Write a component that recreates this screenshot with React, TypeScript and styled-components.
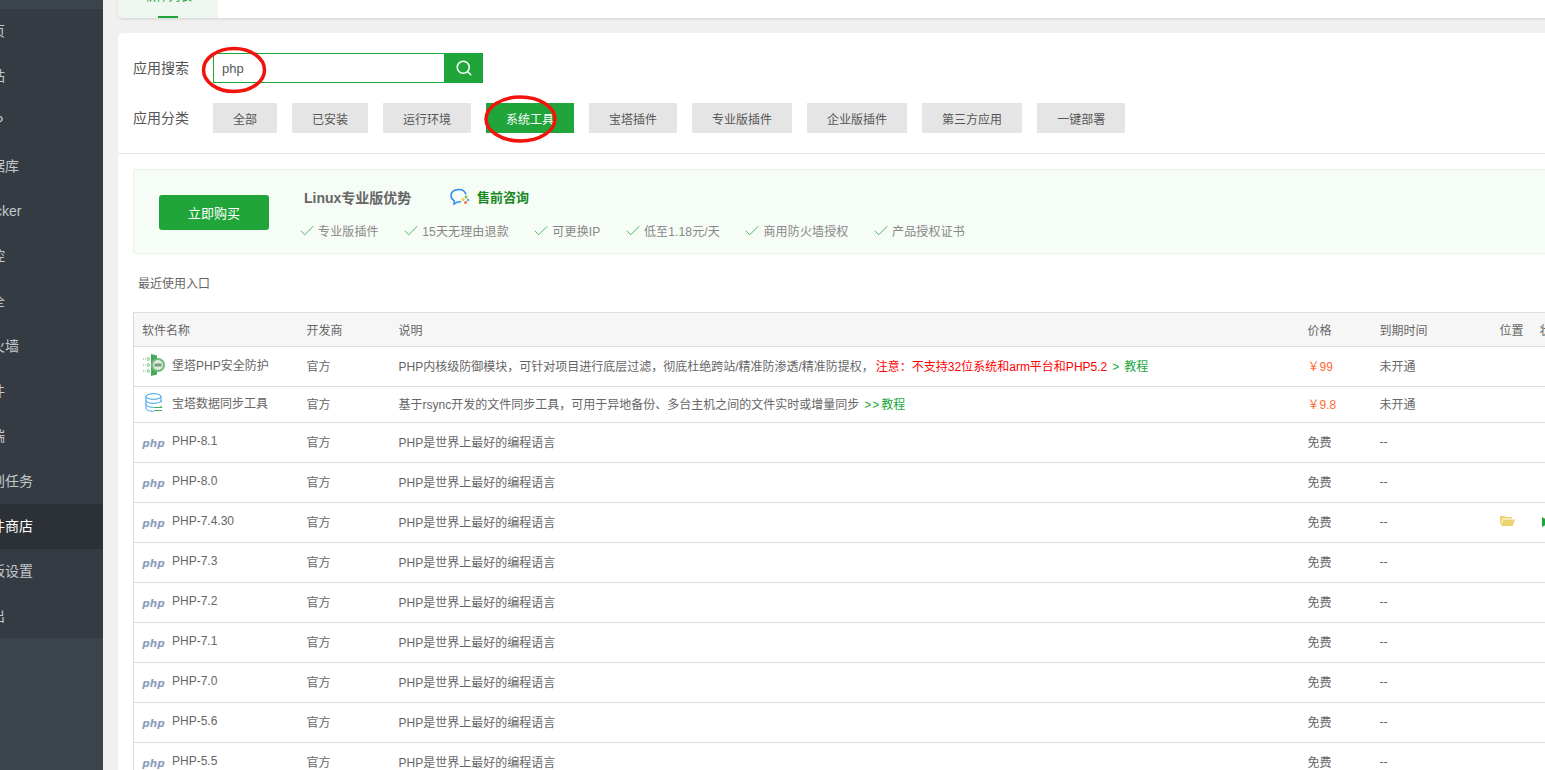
import { Check, Search } from "lucide-react";
import { createGlobalStyle, styled } from "styled-components";

const GlobalStyle = createGlobalStyle`
  html, body {
    margin: 0;
    height: 100%;
    overflow: hidden;
    background: #f0f0f0;
  }
  body {
    font-family: "Liberation Sans", "Noto Sans CJK SC", sans-serif;
    font-size: 12px;
    color: #666;
  }
`;

const Page = styled.div`
  position: relative;
  display: flex;
  width: 1545px;
  height: 770px;
  overflow: hidden;
`;

const Sidebar = styled.aside`
  flex: 0 0 103px;
  display: flex;
  flex-direction: column;
  padding-top: 9px;
  background: #3c444d;
  overflow: hidden;
`;

const MenuList = styled.ul`
  list-style: none;
  margin: 0;
  padding: 0;
  background: #343b43;
`;

const MenuItem = styled.li<{ $active?: boolean }>`
  height: 45px;
  line-height: 45px;
  text-indent: -23px;
  font-size: 14px;
  white-space: nowrap;
  color: ${(p) => (p.$active ? "#fff" : "#c4c8cc")};
  background: ${(p) => (p.$active ? "#2c3138" : "transparent")};

  &:last-child {
    height: 44px;
  }
`;

const Content = styled.main`
  flex: 0 0 1700px;
  padding-left: 15px;
`;

const TabCard = styled.div`
  display: flex;
  height: 18px;
  background: #fff;
  box-shadow: 0 1px 3px rgba(0, 0, 0, 0.12);
  border-radius: 0 0 0 5px;
  overflow: hidden;
`;

const Tab = styled.div`
  position: relative;
  width: 100px;
  height: 18px;
  background: #eef7f0;
  color: #20a53a;
  text-align: center;
  line-height: 12px;
  font-size: 12px;

  span {
    display: block;
    margin-top: -9px;
  }

  &::after {
    content: "";
    position: absolute;
    left: 40px;
    bottom: 0;
    width: 20px;
    height: 2px;
    background: #20a53a;
  }
`;

const MainCard = styled.section`
  margin-top: 15px;
  background: #fff;
  border-radius: 5px 0 0 0;
  height: 800px;
`;

const FilterArea = styled.div`
  display: flex;
  flex-direction: column;
  gap: 20px;
  padding: 20px 15px;
  border-bottom: 1px solid #e2e2e2;
`;

const FilterRow = styled.div`
  display: flex;
  align-items: center;
  height: 30px;
`;

const FilterLabel = styled.label`
  width: 80px;
  margin-top: -2px;
  font-size: 14px;
  color: #555;
`;

const SearchInput = styled.div`
  box-sizing: border-box;
  width: 231px;
  height: 30px;
  line-height: 30px;
  padding-left: 8px;
  border: 1px solid #20a53a;
  border-right: 0;
  font-size: 13px;
  color: #555;
`;

const SearchButton = styled.button`
  display: flex;
  align-items: center;
  justify-content: center;
  width: 39px;
  height: 30px;
  padding: 0;
  border: 0;
  background: #20a53a;
  color: #fff;
`;

const CategoryList = styled.div`
  display: flex;
  gap: 15px;
`;

const CategoryButton = styled.button<{ $active?: boolean }>`
  height: 30px;
  padding: 0 20px;
  border: 0;
  font-family: inherit;
  font-size: 12px;
  color: ${(p) => (p.$active ? "#fff" : "#555")};
  background: ${(p) => (p.$active ? "#20a53a" : "#e5e5e5")};
`;

const Body = styled.div`
  padding: 15px 0 0 15px;
`;

const Banner = styled.div`
  box-sizing: border-box;
  display: flex;
  align-items: center;
  height: 85px;
  padding-left: 25px;
  background: #f6fcf6;
  border: 1px solid #e9f2ec;
  border-radius: 3px 0 0 3px;
`;

const BuyButton = styled.button`
  width: 110px;
  height: 35px;
  margin-top: 2px;
  border: 0;
  border-radius: 3px;
  background: #20a53a;
  color: #fff;
  font-family: inherit;
  font-size: 13px;
`;

const BannerInfo = styled.div`
  display: flex;
  flex-direction: column;
  gap: 15px;
  margin: 3px 0 0 31px;
`;

const BannerHead = styled.div`
  display: flex;
  align-items: center;
  padding-left: 4px;
  height: 20px;
`;

const BannerTitle = styled.span`
  width: 146px;
  font-size: 14px;
  font-weight: 700;
  color: #666;
`;

const Consult = styled.span`
  margin-left: 7px;
  font-size: 13px;
  font-weight: 700;
  color: #16881f;
`;

const PerkList = styled.div`
  display: flex;
  gap: 25.5px;
`;

const Perk = styled.span`
  display: flex;
  align-items: center;
  gap: 2px;
  color: #888;
  letter-spacing: 0.15px;

  svg {
    margin-left: -2px;
    color: #4db560;
  }
`;

const RecentTitle = styled.div`
  padding: 21px 0 0 5px;
  height: 37px;
  line-height: 18px;
  color: #666;
`;

const Table = styled.table`
  width: 1600px;
  table-layout: fixed;
  border-collapse: collapse;
  border-top: 1px solid #ddd;
  border-left: 1px solid #ddd;
`;

const HeadCell = styled.th<{ $width: number }>`
  box-sizing: border-box;
  width: ${(p) => p.$width}px;
  height: 34px;
  padding: 0 8px;
  background: #f6f6f6;
  border-bottom: 1px solid #ddd;
  font-weight: 400;
  text-align: left;
  white-space: nowrap;
  color: #666;
`;

const Row = styled.tr<{ $height: number }>`
  height: ${(p) => p.$height}px;
`;

const Cell = styled.td`
  padding: 0 8px 2px;
  border-bottom: 1px solid #ddd;
  white-space: nowrap;
  overflow: hidden;
  color: #666;
`;

const NameWrap = styled.div`
  display: flex;
  align-items: center;
  gap: 7px;
  margin-top: -2px;
`;

const IconSlot = styled.span`
  display: flex;
  justify-content: center;
  flex: 0 0 23px;
`;

const PhpMark = styled.span`
  font-family: "DejaVu Sans", sans-serif;
  font-size: 10.5px;
  font-weight: 700;
  font-style: italic;
  color: #8f9dbd;
  margin-top: 5px;
`;

const Warn = styled.span`
  margin-left: 2px;
  color: #ff0000;
`;

const Tutorial = styled.span`
  color: #20a53a;
`;

const Arrow = styled.span<{ $after: number }>`
  margin: 0 ${(p) => p.$after}px 0 5px;
  letter-spacing: 1px;
`;

const Price = styled.span`
  color: #ff6a33;
`;

const Annotation = styled.svg<{ $left: number; $top: number }>`
  position: absolute;
  left: ${(p) => p.$left}px;
  top: ${(p) => p.$top}px;
  pointer-events: none;
`;

const PlayMark = styled.svg`
  display: block;
  margin-left: 2px;
`;

const menu = [
  "首页",
  "网站",
  "FTP",
  "数据库",
  "Docker",
  "监控",
  "安全",
  "防火墙",
  "文件",
  "终端",
  "计划任务",
  "软件商店",
  "面板设置",
  "退出",
];

const categories = [
  "全部",
  "已安装",
  "运行环境",
  "系统工具",
  "宝塔插件",
  "专业版插件",
  "企业版插件",
  "第三方应用",
  "一键部署",
];

const perks = [
  "专业版插件",
  "15天无理由退款",
  "可更换IP",
  "低至1.18元/天",
  "商用防火墙授权",
  "产品授权证书",
];

const phpVersions = [
  "PHP-8.1",
  "PHP-8.0",
  "PHP-7.4.30",
  "PHP-7.3",
  "PHP-7.2",
  "PHP-7.1",
  "PHP-7.0",
  "PHP-5.6",
  "PHP-5.5",
];

function ShieldIcon() {
  return (
    <svg width="23" height="24" viewBox="0 0 23 24">
      <path d="M9 1l6 1.500v19L9 23z" fill="#46a957" />
      <circle cx="16" cy="12" r="7" fill="#6fbb7a" />
      <circle cx="16" cy="12" r="5" fill="#dcebdd" />
      <rect x="12.500" y="10.500" width="7" height="3" fill="#7a9a80" />
      <path d="M1 6h6M1 12h6M1 18h6" stroke="#5cb868" strokeDasharray="1 1" fill="none" />
      <path d="M5.500 4l2 2-2 2M5.500 10l2 2-2 2M5.500 16l2 2-2 2" stroke="#5cb868" fill="none" />
    </svg>
  );
}

function DatabaseIcon() {
  return (
    <svg width="18" height="20" viewBox="0 0 18 20" fill="none">
      <ellipse cx="8.500" cy="3.500" rx="7.500" ry="2.800" stroke="#2f9ee8" />
      <path
        d="M1 3.500v12c0 1.600 3.400 2.800 7.500 2.800M16 3.500v6M1 7.500c0 1.600 3.400 2.800 7.500 2.800s7.500-1.200 7.500-2.800M1 11.500c0 1.600 3.400 2.800 7.500 2.800"
        stroke="#2f9ee8"
      />
      <path d="M9 14.500h8l-2-2M17 17.500H9" stroke="#3fb35a" />
    </svg>
  );
}

function ChatIcon() {
  return (
    <svg width="20" height="18" viewBox="0 0 20 18" fill="none">
      <path
        d="M11 13.500c-1 .4-2.200 .5-3.500 .4L4 16l.3-3.200C2.300 11.700 1 9.800 1 7.600 1 4 4.300 1.500 8.500 1.500c3.700 0 6.800 2 7.400 5"
        stroke="#2b8ff0"
        strokeWidth="1.500"
      />
      <circle cx="16" cy="9" r="1.500" fill="#8bc34a" />
      <circle cx="13" cy="11.500" r="1.500" fill="#f5c542" />
      <circle cx="15.500" cy="14.500" r="1.500" fill="#f2734a" />
      <circle cx="18" cy="12" r="1.300" fill="#4fb6e8" />
    </svg>
  );
}

function FolderIcon() {
  return (
    <svg width="15" height="11" viewBox="0 0 15 11">
      <path d="M0 1h5l1 1h6v1.500H3L1 9H0z" fill="#edd36d" />
      <path d="M3.500 4.500H15L12.800 11H0.800z" fill="#edd36d" />
    </svg>
  );
}

export default function App() {
  return (
    <Page>
      <GlobalStyle />
      <Sidebar>
        <MenuList>
          {menu.map((item) => (
            <MenuItem key={item} $active={item === "软件商店"}>
              {item}
            </MenuItem>
          ))}
        </MenuList>
      </Sidebar>
      <Content>
        <TabCard>
          <Tab>
            <span>软件列表</span>
          </Tab>
        </TabCard>
        <MainCard>
          <FilterArea>
            <FilterRow>
              <FilterLabel>应用搜索</FilterLabel>
              <SearchInput>php</SearchInput>
              <SearchButton>
                <Search size={18} strokeWidth={2} />
              </SearchButton>
            </FilterRow>
            <FilterRow>
              <FilterLabel>应用分类</FilterLabel>
              <CategoryList>
                {categories.map((item) => (
                  <CategoryButton key={item} $active={item === "系统工具"}>
                    {item}
                  </CategoryButton>
                ))}
              </CategoryList>
            </FilterRow>
          </FilterArea>
          <Body>
            <Banner>
              <BuyButton>立即购买</BuyButton>
              <BannerInfo>
                <BannerHead>
                  <BannerTitle>Linux专业版优势</BannerTitle>
                  <ChatIcon />
                  <Consult>售前咨询</Consult>
                </BannerHead>
                <PerkList>
                  {perks.map((item) => (
                    <Perk key={item}>
                      <Check size={18} strokeWidth={1.3} />
                      {item}
                    </Perk>
                  ))}
                </PerkList>
              </BannerInfo>
            </Banner>
            <RecentTitle>最近使用入口</RecentTitle>
            <Table>
              <thead>
                <tr>
                  <HeadCell $width={165}>软件名称</HeadCell>
                  <HeadCell $width={92}>开发商</HeadCell>
                  <HeadCell $width={909}>说明</HeadCell>
                  <HeadCell $width={72}>价格</HeadCell>
                  <HeadCell $width={120}>到期时间</HeadCell>
                  <HeadCell $width={40}>位置</HeadCell>
                  <HeadCell $width={202}>状态</HeadCell>
                </tr>
              </thead>
              <tbody>
                <Row $height={40}>
                  <Cell>
                    <NameWrap>
                      <IconSlot>
                        <ShieldIcon />
                      </IconSlot>
                      堡塔PHP安全防护
                    </NameWrap>
                  </Cell>
                  <Cell>官方</Cell>
                  <Cell>
                    PHP内核级防御模块，可针对项目进行底层过滤，彻底杜绝跨站/精准防渗透/精准防提权，
                    <Warn>注意：不支持32位系统和arm平台和PHP5.2</Warn>
                    <Tutorial>
                      <Arrow $after={4}>&gt;</Arrow>教程
                    </Tutorial>
                  </Cell>
                  <Cell>
                    <Price>￥99</Price>
                  </Cell>
                  <Cell>未开通</Cell>
                  <Cell />
                  <Cell />
                </Row>
                <Row $height={36}>
                  <Cell>
                    <NameWrap>
                      <IconSlot>
                        <DatabaseIcon />
                      </IconSlot>
                      宝塔数据同步工具
                    </NameWrap>
                  </Cell>
                  <Cell>官方</Cell>
                  <Cell>
                    基于rsync开发的文件同步工具，可用于异地备份、多台主机之间的文件实时或增量同步
                    <Tutorial>
                      <Arrow $after={1}>&gt;&gt;</Arrow>教程
                    </Tutorial>
                  </Cell>
                  <Cell>
                    <Price>￥9.8</Price>
                  </Cell>
                  <Cell>未开通</Cell>
                  <Cell />
                  <Cell />
                </Row>
                {phpVersions.map((version) => (
                  <Row key={version} $height={40}>
                    <Cell>
                      <NameWrap>
                        <IconSlot>
                          <PhpMark>php</PhpMark>
                        </IconSlot>
                        {version}
                      </NameWrap>
                    </Cell>
                    <Cell>官方</Cell>
                    <Cell>PHP是世界上最好的编程语言</Cell>
                    <Cell>免费</Cell>
                    <Cell>--</Cell>
                    <Cell>{version === "PHP-7.4.30" && <FolderIcon />}</Cell>
                    <Cell>
                      {version === "PHP-7.4.30" && (
                        <PlayMark width="10" height="10" viewBox="0 0 10 10">
                          <path d="M0 0l9 5-9 5z" fill="#20a53a" />
                        </PlayMark>
                      )}
                    </Cell>
                  </Row>
                ))}
              </tbody>
            </Table>
          </Body>
        </MainCard>
      </Content>
      <Annotation $left={201} $top={46} width="66" height="48" viewBox="0 0 66 48" fill="none">
        <ellipse cx="33" cy="24" rx="30.500" ry="21.500" stroke="#f2140c" strokeWidth="3.500" />
      </Annotation>
      <Annotation $left={483} $top={94} width="75" height="50" viewBox="0 0 75 50" fill="none">
        <ellipse cx="37.500" cy="25" rx="34.500" ry="22" stroke="#f2140c" strokeWidth="3.500" />
      </Annotation>
    </Page>
  );
}
